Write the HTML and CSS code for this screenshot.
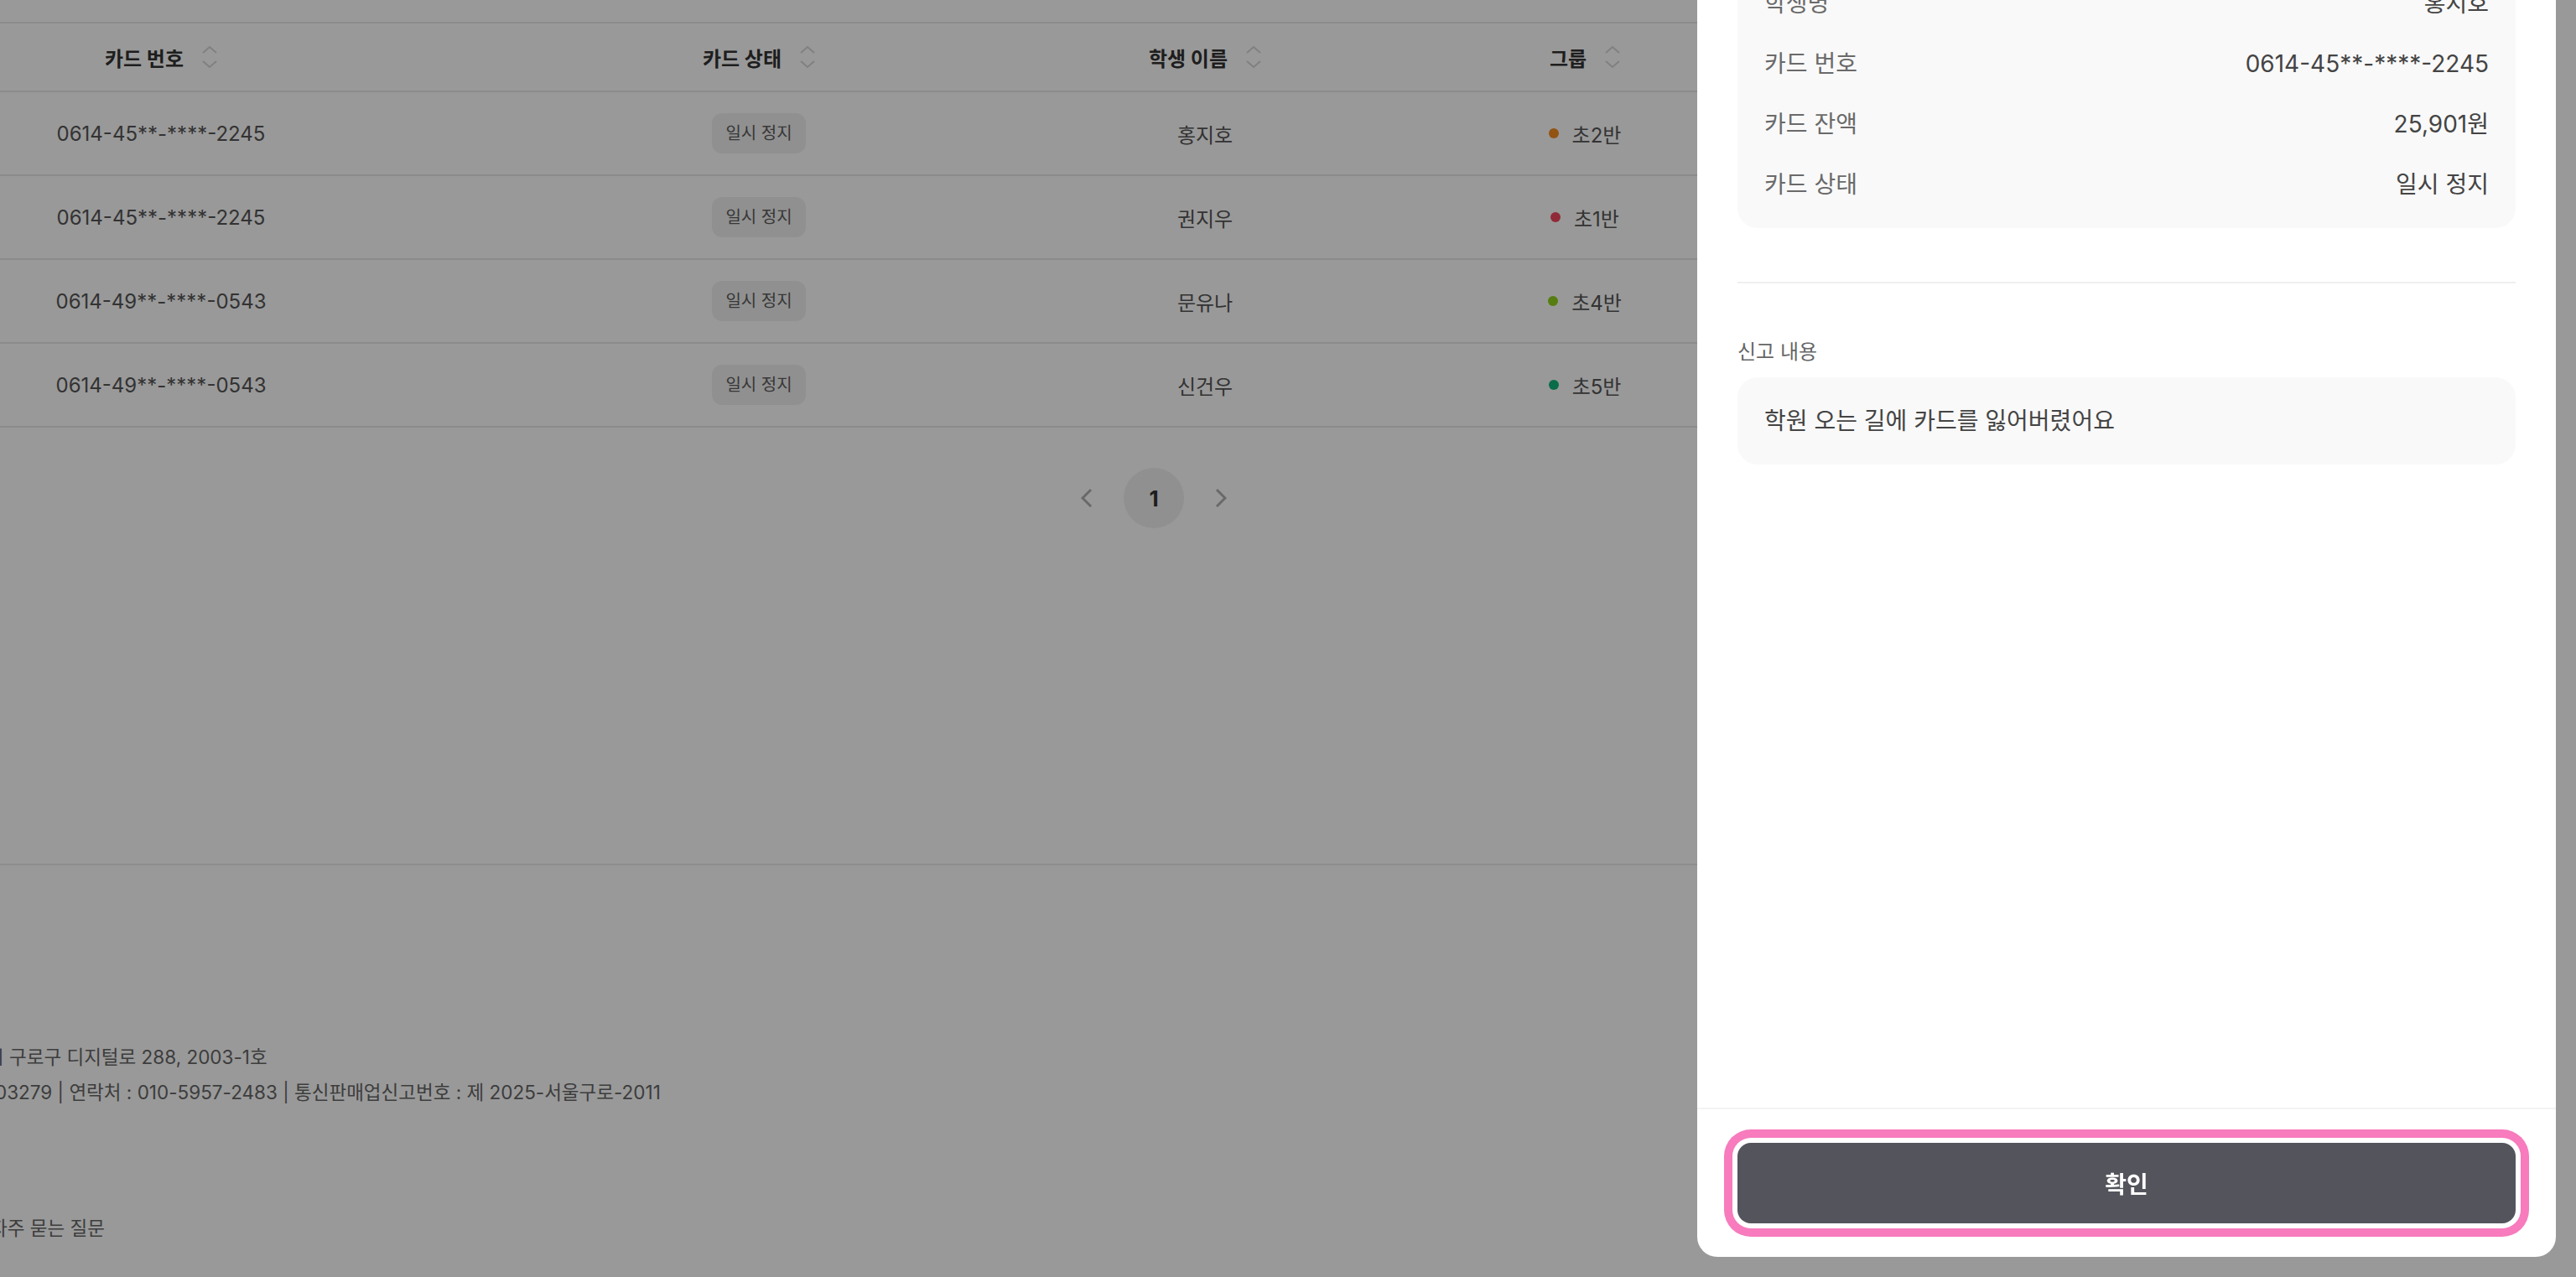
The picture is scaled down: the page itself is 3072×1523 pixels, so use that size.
FILE: index.html
```html
<!DOCTYPE html>
<html lang="ko">
<head>
    <meta charset="UTF-8">
    <meta name="viewport" content="width=device-width, initial-scale=1.0">
    <title>카드 분실 신고</title>
    <link rel="stylesheet" href="styles.css">
</head>
<body>
    <div class="page">
        <main class="content">
            <div class="card-table">
                <div class="table-row table-head">
                    <div class="cell"><span>카드 번호</span><svg class="sort-icon" viewBox="0 0 18 30"><polyline points="1,10 9,3 17,10"/><polyline points="1,20 9,27 17,20"/></svg></div>
                    <div class="cell"><span>카드 상태</span><svg class="sort-icon" viewBox="0 0 18 30"><polyline points="1,10 9,3 17,10"/><polyline points="1,20 9,27 17,20"/></svg></div>
                    <div class="cell"><span>학생 이름</span><svg class="sort-icon" viewBox="0 0 18 30"><polyline points="1,10 9,3 17,10"/><polyline points="1,20 9,27 17,20"/></svg></div>
                    <div class="cell"><span>그룹</span><svg class="sort-icon" viewBox="0 0 18 30"><polyline points="1,10 9,3 17,10"/><polyline points="1,20 9,27 17,20"/></svg></div>
                    <div class="cell"></div>
                </div>
                <div class="table-row">
                    <div class="cell">0614-45**-****-2245</div>
                    <div class="cell"><span class="status-badge">일시 정지</span></div>
                    <div class="cell">홍지호</div>
                    <div class="cell"><span class="group-dot orange"></span>초2반</div>
                    <div class="cell"></div>
                </div>
                <div class="table-row">
                    <div class="cell">0614-45**-****-2245</div>
                    <div class="cell"><span class="status-badge">일시 정지</span></div>
                    <div class="cell">권지우</div>
                    <div class="cell"><span class="group-dot red"></span>초1반</div>
                    <div class="cell"></div>
                </div>
                <div class="table-row">
                    <div class="cell">0614-49**-****-0543</div>
                    <div class="cell"><span class="status-badge">일시 정지</span></div>
                    <div class="cell">문유나</div>
                    <div class="cell"><span class="group-dot lime"></span>초4반</div>
                    <div class="cell"></div>
                </div>
                <div class="table-row">
                    <div class="cell">0614-49**-****-0543</div>
                    <div class="cell"><span class="status-badge">일시 정지</span></div>
                    <div class="cell">신건우</div>
                    <div class="cell"><span class="group-dot green"></span>초5반</div>
                    <div class="cell"></div>
                </div>
            </div>

            <nav class="pagination">
                <button class="page-arrow"><svg viewBox="0 0 14 24"><polyline points="12,2 2,12 12,22"/></svg></button>
                <button class="page-num active">1</button>
                <button class="page-arrow"><svg viewBox="0 0 14 24"><polyline points="2,2 12,12 2,22"/></svg></button>
            </nav>
        </main>

        <footer class="site-footer">
            <p class="footer-line addr">시 구로구 디지털로 288, 2003-1호</p>
            <p class="footer-line biz">03279 | 연락처 : 010-5957-2483 | 통신판매업신고번호 : 제 2025-서울구로-2011</p>
            <p class="footer-line links">자주 묻는 질문</p>
        </footer>
    </div>

    <div class="backdrop"></div>

    <aside class="drawer">
        <div class="drawer-body">
            <dl class="info-card">
                <div class="info-row"><dt>학생명</dt><dd>홍지호</dd></div>
                <div class="info-row"><dt>카드 번호</dt><dd>0614-45**-****-2245</dd></div>
                <div class="info-row"><dt>카드 잔액</dt><dd>25,901원</dd></div>
                <div class="info-row"><dt>카드 상태</dt><dd>일시 정지</dd></div>
            </dl>

            <hr class="divider">

            <section class="report">
                <h3 class="report-label">신고 내용</h3>
                <p class="report-box">학원 오는 길에 카드를 잃어버렸어요</p>
            </section>
        </div>
        <div class="drawer-footer">
            <button class="confirm-button">확인</button>
        </div>
    </aside>
</body>
</html>
```

FILE: styles.css
```css
* {
    box-sizing: border-box;
}

body {
    margin: 0;
    height: 100vh;
    overflow: hidden;
    background-color: #fff;
    font-family: Inter, "Noto Sans CJK KR", sans-serif;
    color: #555;
}

button {
    font-family: inherit;
    border: none;
    background: none;
    padding: 0;
    cursor: pointer;
}

/* page behind the drawer (cropped on the left) */
.page {
    width: 3152px;
    margin-left: -200px;
}

.content {
    min-height: 1030px;
    padding-top: 26px;
}

.card-table {
    border-top: 2px solid #e8e8e8;
}

.table-row {
    display: grid;
    grid-template-columns: 784px 642px 422px 484px 1fr;
    height: 100px;
    border-bottom: 2px solid #e8e8e8;
    font-size: 24px;
    color: #555;
}

.table-head {
    height: 82px;
    font-weight: 700;
    color: #333;
}

.cell {
    display: flex;
    align-items: center;
    justify-content: center;
}

.table-head .cell {
    gap: 22px;
}

.sort-icon {
    width: 18px;
    height: 30px;
    fill: none;
    stroke: #d6d6d6;
    stroke-width: 2;
}

.status-badge {
    padding: 10px 16px;
    border-radius: 12px;
    background-color: #f1f1f1;
    font-size: 20px;
    line-height: 28px;
    color: #5c5c5c;
}

.group-dot {
    width: 12px;
    height: 12px;
    border-radius: 50%;
    margin-right: 16px;
}

.group-dot.orange { background-color: #f58a1f; }
.group-dot.red { background-color: #f0475e; }
.group-dot.lime { background-color: #8fd11c; }
.group-dot.green { background-color: #12b579; }

.pagination {
    display: flex;
    justify-content: center;
    align-items: center;
    gap: 24px;
    margin-top: 48px;
}

.page-arrow {
    width: 40px;
    height: 72px;
    display: flex;
    align-items: center;
    justify-content: center;
}

.page-arrow svg {
    width: 14px;
    height: 24px;
    fill: none;
    stroke: #b0b0b0;
    stroke-width: 3;
}

.page-num {
    width: 72px;
    height: 72px;
    border-radius: 50%;
    font-size: 26px;
    font-weight: 700;
    color: #333;
}

.page-num.active {
    background-color: #f0f0f0;
}

.site-footer {
    border-top: 2px solid #ececec;
    padding: 208px 0 0 200px;
    font-size: 22.5px;
    line-height: 42px;
    color: #666;
}

.footer-line {
    margin: 0;
}

.footer-line.addr { margin-left: -16px; }
.footer-line.biz { margin-left: -6px; }
.footer-line.links {
    margin-left: -12px;
    margin-top: 120px;
}

/* modal */
.backdrop {
    position: fixed;
    inset: 0;
    background-color: rgba(0, 0, 0, 0.4);
}

.drawer {
    position: fixed;
    top: 0;
    right: 24px;
    bottom: 24px;
    width: 1024px;
    display: flex;
    flex-direction: column;
    background-color: #fff;
    border-radius: 0 0 24px 24px;
    overflow: hidden;
}

.drawer-body {
    flex: 1;
    padding: 0 48px;
    overflow: hidden;
}

.info-card {
    margin: -48px 0 0;
    padding: 32px;
    display: flex;
    flex-direction: column;
    gap: 32px;
    border-radius: 24px;
    background-color: #f9f9f9;
    font-size: 28px;
    line-height: 40px;
}

.info-row {
    display: flex;
    justify-content: space-between;
}

.info-row dt {
    color: #6a6a6a;
}

.info-row dd {
    margin: 0;
    color: #444;
}

.divider {
    height: 2px;
    margin: 64px 0;
    border: none;
    background-color: #efefef;
}

.report-label {
    margin: 0 0 12px;
    font-size: 24px;
    line-height: 36px;
    font-weight: 400;
    color: #666;
}

.report-box {
    margin: 0;
    padding: 32px;
    border-radius: 24px;
    background-color: #f9f9f9;
    font-size: 28px;
    line-height: 40px;
    color: #444;
}

.drawer-footer {
    padding: 40px 48px;
    border-top: 2px solid #f3f3f3;
}

.confirm-button {
    width: 100%;
    height: 96px;
    border-radius: 16px;
    background-color: #53545c;
    color: #fff;
    font-size: 28px;
    font-weight: 700;
    box-shadow: 0 0 0 6px #fff, 0 0 0 16px #f77bbd;
}
```
